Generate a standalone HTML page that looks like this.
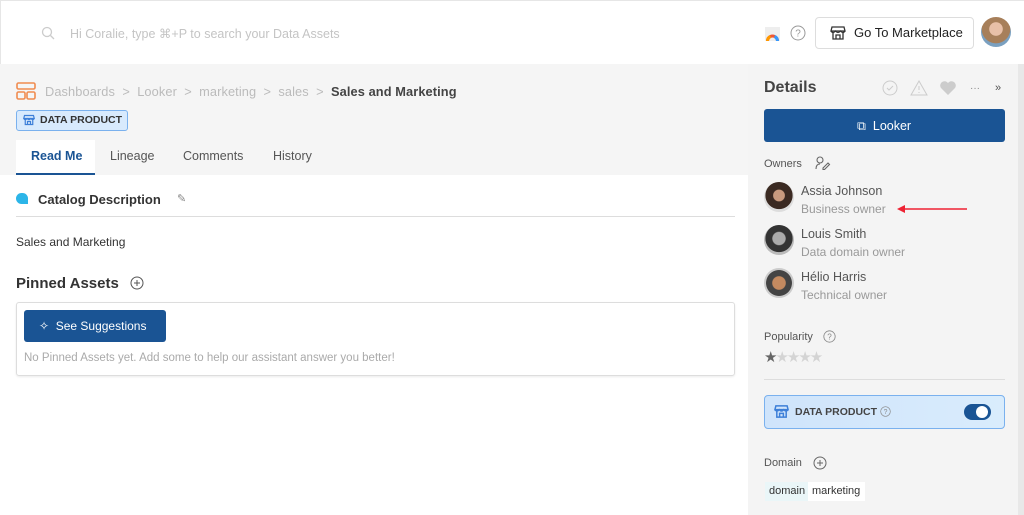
<!DOCTYPE html>
<html><head><meta charset="utf-8"><style>
*{box-sizing:border-box;margin:0;padding:0}
body{width:1024px;height:515px;overflow:hidden;font-family:"Liberation Sans",sans-serif;background:#f5f5f5;position:relative;color:#333}
.abs{position:absolute}
.hdr{left:0;top:0;width:1024px;height:64px;background:#fff;border-top:1px solid #e6e6e6;border-left:1px solid #e6e6e6}
.left{left:0;top:175px;width:748px;height:340px;background:#fff}
.right{left:748px;top:64px;width:276px;height:451px;background:#f4f4f4}
.sb{left:1018px;top:64px;width:6px;height:451px;background:#e8e8e8}
.t{position:absolute;white-space:nowrap}
</style></head><body>
<div class="abs hdr"></div>
<svg class="abs" style="left:41px;top:26px" width="14" height="14" viewBox="0 0 14 14"><circle cx="6" cy="6" r="4.5" fill="none" stroke="#ccc" stroke-width="1.3"/><path d="M9.5 9.5L13 13" stroke="#ccc" stroke-width="1.3"/></svg>
<div class="t" style="left:70px;top:26px;font-size:12.5px;color:#c4c4c4">Hi Coralie, type ⌘+P to search your Data Assets</div>
<svg class="abs" style="left:765px;top:27px" width="15" height="14" viewBox="0 0 15 14"><rect width="15" height="14" fill="#eee"/><path d="M1 14A6.5 6.5 0 0 1 14 14H11A3.5 3.5 0 0 0 4 14Z" fill="#e53"/><path d="M1 14A6.5 6.5 0 0 1 5 8L6 11A3.5 3.5 0 0 0 4 14Z" fill="#f90"/><path d="M14 14A6.5 6.5 0 0 0 10 8L9 11A3.5 3.5 0 0 1 11 14Z" fill="#39f"/></svg>
<svg class="abs" style="left:790px;top:25px" width="16" height="16" viewBox="0 0 16 16"><circle cx="8" cy="8" r="7" fill="none" stroke="#999" stroke-width="1"/><text x="8" y="11.5" font-size="10" text-anchor="middle" fill="#999" font-family="Liberation Sans">?</text></svg>
<div class="abs" style="left:815px;top:17px;width:159px;height:32px;border:1px solid #ddd;border-radius:4px;background:#fff"></div>
<svg class="abs" style="left:830px;top:25px" width="16" height="16" viewBox="0 0 16 16" fill="none" stroke="#333" stroke-width="1.3"><path d="M2 2h12l1 4H1z M1 6q2 3 4.5 0q2.5 3 5 0q2.5 3 4.5 0 M3 8v6h10V8 M6 14v-4h4v4"/></svg>
<div class="t" style="left:854px;top:25px;font-size:13px;color:#222">Go To Marketplace</div>
<div class="abs" style="left:981px;top:17px;width:30px;height:30px;border-radius:50%;background:radial-gradient(circle at 50% 40%,#e8c0a8 0 28%,#a77f5a 30% 60%,#7aa0c0 62%)"></div>

<div class="abs left"></div>
<div class="abs right"></div>
<div class="abs sb"></div>

<svg class="abs" style="left:16px;top:82px" width="20" height="18" viewBox="0 0 20 18" fill="none" stroke="#f08b4f" stroke-width="1.6"><rect x="1" y="1" width="18" height="6" rx="1.5"/><rect x="1" y="10" width="8" height="7" rx="1.5"/><rect x="11" y="10" width="8" height="7" rx="1.5"/></svg>
<div class="t" style="left:45px;top:84px;font-size:12.8px;color:#bbb;letter-spacing:0.1px">Dashboards &nbsp;&gt;&nbsp; Looker &nbsp;&gt;&nbsp; marketing &nbsp;&gt;&nbsp; sales &nbsp;&gt;&nbsp; <b style="color:#444">Sales and Marketing</b></div>
<div class="abs" style="left:16px;top:110px;width:112px;height:21px;border:1px solid #7ab1ee;border-radius:3px;background:#d8eafd"></div>
<svg class="abs" style="left:23px;top:114px" width="12" height="12" viewBox="0 0 16 16" fill="none" stroke="#3d7fd8" stroke-width="1.6"><path d="M2 2h12l1 4H1z M1 6q2 3 4.5 0q2.5 3 5 0q2.5 3 4.5 0 M3 8v6h10V8 M6 14v-4h4v4"/></svg>
<div class="t" style="left:40px;top:114px;font-size:10.5px;font-weight:bold;color:#333">DATA PRODUCT</div>
<div class="abs" style="left:16px;top:140px;width:79px;height:35px;background:#fff;border-bottom:2px solid #1a5494"></div>
<div class="t" style="left:31px;top:149px;font-size:12.5px;font-weight:bold;color:#1a5494">Read Me</div>
<div class="t" style="left:110px;top:149px;font-size:12.5px;color:#555">Lineage</div>
<div class="t" style="left:183px;top:149px;font-size:12.5px;color:#555">Comments</div>
<div class="t" style="left:273px;top:149px;font-size:12.5px;color:#555">History</div>

<div class="abs" style="left:16px;top:193px;width:12px;height:11px;background:#2cb5e8;border-radius:6px 6px 0 6px"></div>
<div class="t" style="left:38px;top:192px;font-size:13px;font-weight:bold;color:#333">Catalog Description</div>
<div class="t" style="left:177px;top:192px;font-size:11px;color:#888">✎</div>
<div class="abs" style="left:16px;top:216px;width:719px;height:1px;background:#ddd"></div>
<div class="t" style="left:16px;top:235px;font-size:12px;color:#333">Sales and Marketing</div>
<div class="t" style="left:16px;top:275px;font-size:15px;font-weight:bold;color:#333">Pinned Assets</div>
<svg class="abs" style="left:130px;top:276px" width="14" height="14" viewBox="0 0 14 14" fill="none" stroke="#555"><circle cx="7" cy="7" r="6"/><path d="M7 4v6M4 7h6"/></svg>
<div class="abs" style="left:16px;top:302px;width:719px;height:74px;border:1px solid #ddd;border-radius:3px;box-shadow:0 1px 2px rgba(0,0,0,.08)"></div>
<div class="abs" style="left:24px;top:310px;width:142px;height:32px;background:#1a5494;border-radius:3px"></div>
<div class="t" style="left:39px;top:319px;font-size:12px;color:#fff">✧ &nbsp;See Suggestions</div>
<div class="t" style="left:24px;top:352px;font-size:11.5px;color:#aaa">No Pinned Assets yet. Add some to help our assistant answer you better!</div>

<div class="t" style="left:764px;top:79px;font-size:16px;font-weight:bold;color:#444">Details</div>
<svg class="abs" style="left:882px;top:80px" width="120" height="16" viewBox="0 0 120 16"><circle cx="8" cy="8" r="7" fill="none" stroke="#ccc"/><path d="M5 8l2 2 4-4" stroke="#ccc" fill="none"/><path d="M37 1L45 15H29Z" fill="none" stroke="#ccc"/><path d="M37 6v4M37 12v1" stroke="#ccc"/><path d="M66 15L59 8A4 4 0 0 1 66 3A4 4 0 0 1 73 8Z" fill="#ccc"/><text x="93" y="11" font-size="10" fill="#888" text-anchor="middle">···</text><text x="116" y="11" font-size="11" fill="#555" text-anchor="middle">»</text></svg>
<div class="abs" style="left:764px;top:109px;width:241px;height:33px;background:#1a5494;border-radius:3px"></div>
<div class="t" style="left:857px;top:119px;font-size:12.5px;color:#fff">⧉ &nbsp;Looker</div>
<div class="t" style="left:764px;top:158px;font-size:11px;color:#555">Owners</div>
<svg class="abs" style="left:815px;top:156px" width="16" height="14" viewBox="0 0 16 14" fill="none" stroke="#666" stroke-width="1.1"><circle cx="5" cy="4" r="3"/><path d="M1 13q0-5 4-5"/><path d="M8 12l5-5 1.5 1.5-5 5H8z"/></svg>
<div class="abs" style="left:764px;top:182px;width:30px;height:30px;border-radius:50%;background:radial-gradient(circle at 50% 45%,#c99a7e 0 25%,#3b2a22 28% 60%,#ddd 62%)"></div>
<div class="t" style="left:801px;top:184px;font-size:12.5px;color:#555">Assia Johnson</div>
<div class="t" style="left:801px;top:202px;font-size:12px;color:#999">Business owner</div>
<svg class="abs" style="left:895px;top:204px" width="75" height="10"><path d="M72 5H8" stroke="#e23" stroke-width="1.6"/><path d="M2 5L10 1V9Z" fill="#e23"/></svg>
<div class="abs" style="left:764px;top:225px;width:30px;height:30px;border-radius:50%;background:radial-gradient(circle at 50% 45%,#aaa 0 28%,#333 32% 60%,#bbb 62%)"></div>
<div class="t" style="left:801px;top:227px;font-size:12.5px;color:#555">Louis Smith</div>
<div class="t" style="left:801px;top:245px;font-size:12px;color:#999">Data domain owner</div>
<div class="abs" style="left:764px;top:268px;width:30px;height:30px;border-radius:50%;background:radial-gradient(circle at 50% 50%,#c48a60 0 30%,#444 34% 60%,#ccc 62%)"></div>
<div class="t" style="left:801px;top:270px;font-size:12.5px;color:#555">Hélio Harris</div>
<div class="t" style="left:801px;top:288px;font-size:12px;color:#999">Technical owner</div>
<div class="t" style="left:764px;top:331px;font-size:11px;color:#555">Popularity</div>
<svg class="abs" style="left:823px;top:330px" width="13" height="13" viewBox="0 0 16 16"><circle cx="8" cy="8" r="7" fill="none" stroke="#888"/><text x="8" y="11.5" font-size="10" text-anchor="middle" fill="#888">?</text></svg>
<div class="t" style="left:764px;top:348px;font-size:15px;letter-spacing:-2px;color:#d4d4d4"><span style="color:#666">★</span>★★★★</div>
<div class="abs" style="left:764px;top:379px;width:241px;height:1px;background:#ddd"></div>
<div class="abs" style="left:764px;top:395px;width:241px;height:34px;border:1px solid #7ab1ee;border-radius:4px;background:linear-gradient(90deg,#cfe4fb,#d9ecfc)"></div>
<svg class="abs" style="left:774px;top:404px" width="15" height="15" viewBox="0 0 16 16" fill="none" stroke="#3d7fd8" stroke-width="1.6"><path d="M2 2h12l1 4H1z M1 6q2 3 4.5 0q2.5 3 5 0q2.5 3 4.5 0 M3 8v6h10V8 M6 14v-4h4v4"/></svg>
<div class="t" style="left:795px;top:406px;font-size:10.5px;font-weight:bold;color:#444">DATA PRODUCT</div>
<svg class="abs" style="left:880px;top:406px" width="11" height="11" viewBox="0 0 16 16"><circle cx="8" cy="8" r="7" fill="none" stroke="#888"/><text x="8" y="11.5" font-size="10" text-anchor="middle" fill="#888">?</text></svg>
<div class="abs" style="left:964px;top:404px;width:27px;height:16px;border-radius:8px;background:#1a5494"></div>
<div class="abs" style="left:976px;top:406px;width:12px;height:12px;border-radius:50%;background:#fff"></div>
<div class="t" style="left:764px;top:457px;font-size:11px;color:#555">Domain</div>
<svg class="abs" style="left:813px;top:456px" width="14" height="14" viewBox="0 0 14 14" fill="none" stroke="#666"><circle cx="7" cy="7" r="6"/><path d="M7 4v6M4 7h6"/></svg>
<div class="abs" style="left:765px;top:482px;width:43px;height:19px;background:#eaf6f8"></div>
<div class="t" style="left:769px;top:485px;font-size:11px;color:#333">domain</div>
<div class="abs" style="left:808px;top:482px;width:57px;height:19px;background:#fff"></div>
<div class="t" style="left:812px;top:485px;font-size:11px;color:#333">marketing</div>
</body></html>
